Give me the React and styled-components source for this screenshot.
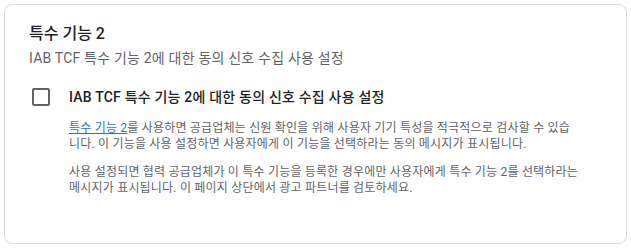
import React from 'react'
import styled, { createGlobalStyle } from 'styled-components'

const GlobalStyle = createGlobalStyle`
    body {
        margin: 0;
        background: #ffffff;
        font-family: Roboto, "Noto Sans CJK KR", sans-serif;
    }
`

const App = () => {
    return (
        <Page>
            <GlobalStyle />
            <Card>
                <Title>특수 기능 2</Title>
                <Subtitle>IAB TCF 특수 기능 2에 대한 동의 신호 수집 사용 설정</Subtitle>
                <Row>
                    <Box type="checkbox" />
                    <Body>
                        <Label>IAB TCF 특수 기능 2에 대한 동의 신호 수집 사용 설정</Label>
                        <Text>
                            <Link href="#">특수 기능 2</Link>를 사용하면 공급업체는 신원 확인을 위해 사용자 기기 특성을 적극적으로 검사할 수 있습니다. 이 기능을 사용 설정하면 사용자에게 이 기능을 선택하라는 동의 메시지가 표시됩니다.
                        </Text>
                        <Text>
                            사용 설정되면 협력 공급업체가 이 특수 기능을 등록한 경우에만 사용자에게 특수 기능 2를 선택하라는 메시지가 표시됩니다. 이 페이지 상단에서 광고 파트너를 검토하세요.
                        </Text>
                    </Body>
                </Row>
            </Card>
        </Page>
    )
}

const Page = styled.div`
    padding: 4px;
    width: 631px;
    height: 248px;
    box-sizing: border-box;
`

const Card = styled.div`
    box-sizing: border-box;
    width: 623px;
    height: 240px;
    border: 1px solid #dadce0;
    border-radius: 8px;
    padding: 17px 24px 0 24px;
`

const Title = styled.div`
    font-size: 16px;
    font-weight: 500;
    line-height: 24px;
    color: #202124;
`

const Subtitle = styled.div`
    margin-top: 2px;
    font-size: 14px;
    line-height: 20px;
    letter-spacing: 0.2px;
    color: #5f6368;
`

const Row = styled.div`
    display: flex;
    align-items: flex-start;
    gap: 19px;
    margin-top: 19px;
    padding-left: 3px;
`

const Box = styled.input`
    appearance: none;
    margin: 1px 0 0 0;
    flex: none;
    width: 18px;
    height: 18px;
    border: 2px solid #5f6368;
    border-radius: 2px;
    box-sizing: border-box;
`

const Body = styled.div`
    display: flex;
    flex-direction: column;
    width: 510px;
`

const Label = styled.div`
    font-size: 14px;
    font-weight: 500;
    line-height: 20px;
    letter-spacing: 0.2px;
    color: #202124;
`

const Text = styled.p`
    margin: 13px 0 0 0;
    font-size: 12px;
    line-height: 16px;
    letter-spacing: 0.2px;
    color: #5f6368;
    word-break: break-all;

    & + & {
        margin-top: 12px;
    }
`

const Link = styled.a`
    color: #1a73e8;
    text-decoration: underline;
`

export default App
